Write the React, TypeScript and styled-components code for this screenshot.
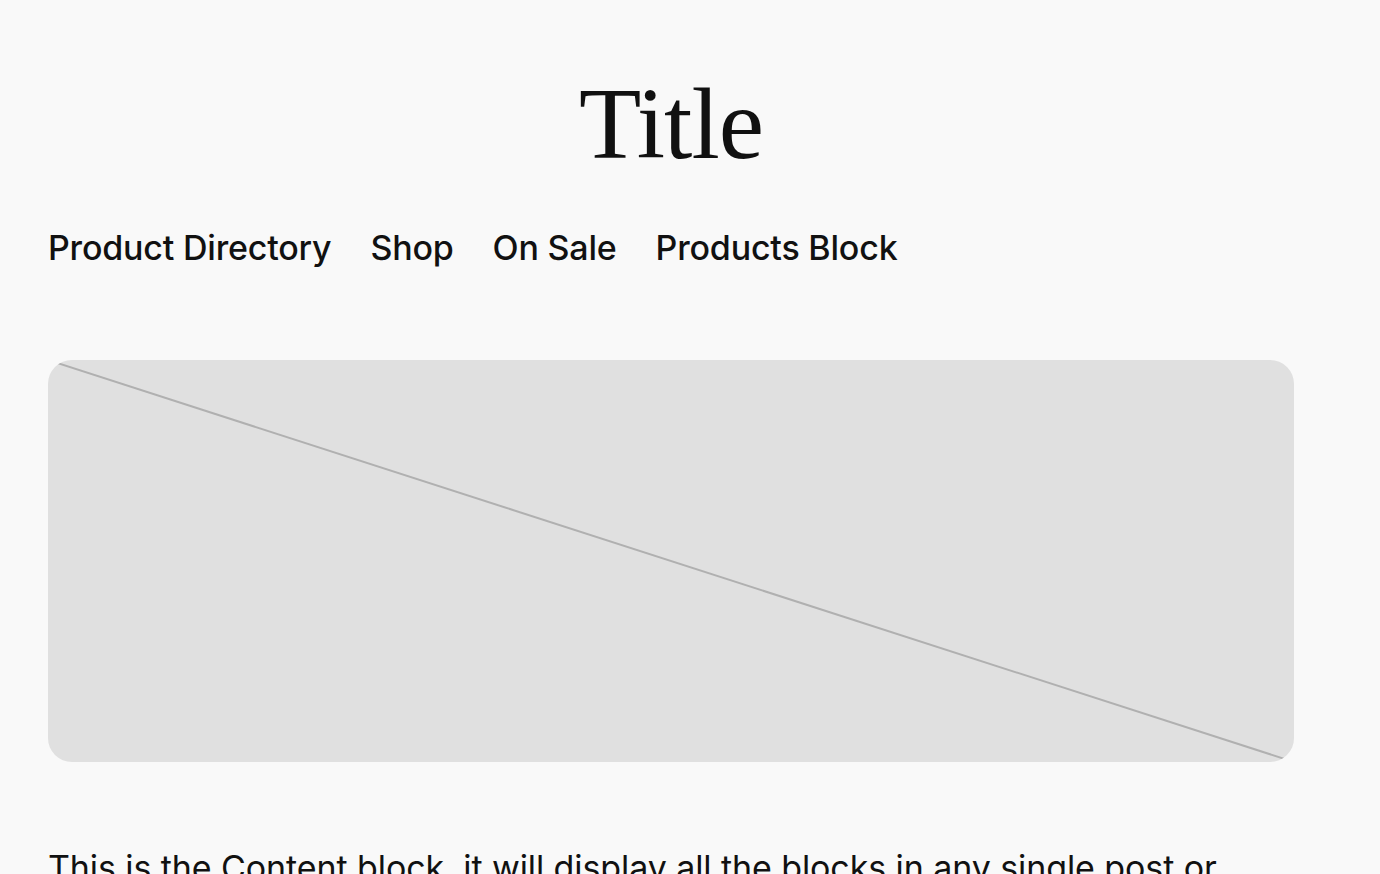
import React from 'react';
import styled, { createGlobalStyle } from 'styled-components';

const GlobalStyle = createGlobalStyle`
    html, body {
        margin: 0;
        padding: 0;
        background: #f9f9f9;
    }
    body {
        font-family: Inter, "Noto Sans", sans-serif;
        color: #111111;
    }
`;

const Page = styled.div`
    width: 1246px;
    padding: 0 48px;
    box-sizing: content-box;
`;

const Header = styled.header`
    display: flex;
    flex-direction: column;
    padding-top: 64px;
`;

const SiteTitle = styled.h1`
    margin: 0;
    text-align: center;
    font-family: "Liberation Serif", "DejaVu Serif", serif;
    font-weight: 400;
    font-size: 102px;
    line-height: 120px;
    letter-spacing: -1px;
    color: #111111;
`;

const Nav = styled.nav`
    display: flex;
    gap: 39px;
    margin-top: 44px;
`;

const NavLink = styled.a`
    font-family: Inter, "Noto Sans", sans-serif;
    font-size: 34px;
    font-weight: 500;
    line-height: 40px;
    color: #111111;
    text-decoration: none;
    letter-spacing: -0.2px;
`;

const Placeholder = styled.div`
    margin-top: 92px;
    height: 402px;
    background: #e0e0e0;
    border-radius: 24px;
    overflow: hidden;

    svg {
        display: block;
        width: 100%;
        height: 100%;
    }
`;

const Content = styled.p`
    margin: 83px 0 0;
    font-family: Inter, "Noto Sans", sans-serif;
    font-size: 34px;
    font-weight: 400;
    line-height: 46px;
    letter-spacing: -0.09px;
    color: #111111;
`;

const navItems = ['Product Directory', 'Shop', 'On Sale', 'Products Block'];

export default function App() {
    return (
        <>
            <GlobalStyle />
            <Page>
                <Header>
                    <SiteTitle>Title</SiteTitle>
                    <Nav>
                        {navItems.map(item => (
                            <NavLink key={item} href="#">{item}</NavLink>
                        ))}
                    </Nav>
                </Header>
                <Placeholder>
                    <svg viewBox="0 0 1246 402" preserveAspectRatio="none">
                        <line x1="0" y1="0" x2="1246" y2="402" stroke="#b0b0b0" strokeWidth="2" />
                    </svg>
                </Placeholder>
                <Content>
                    This is the Content block, it will display all the blocks in any single post or
                    page. That might be a header, paragraphs, images, or any other blocks.
                </Content>
            </Page>
        </>
    );
}
